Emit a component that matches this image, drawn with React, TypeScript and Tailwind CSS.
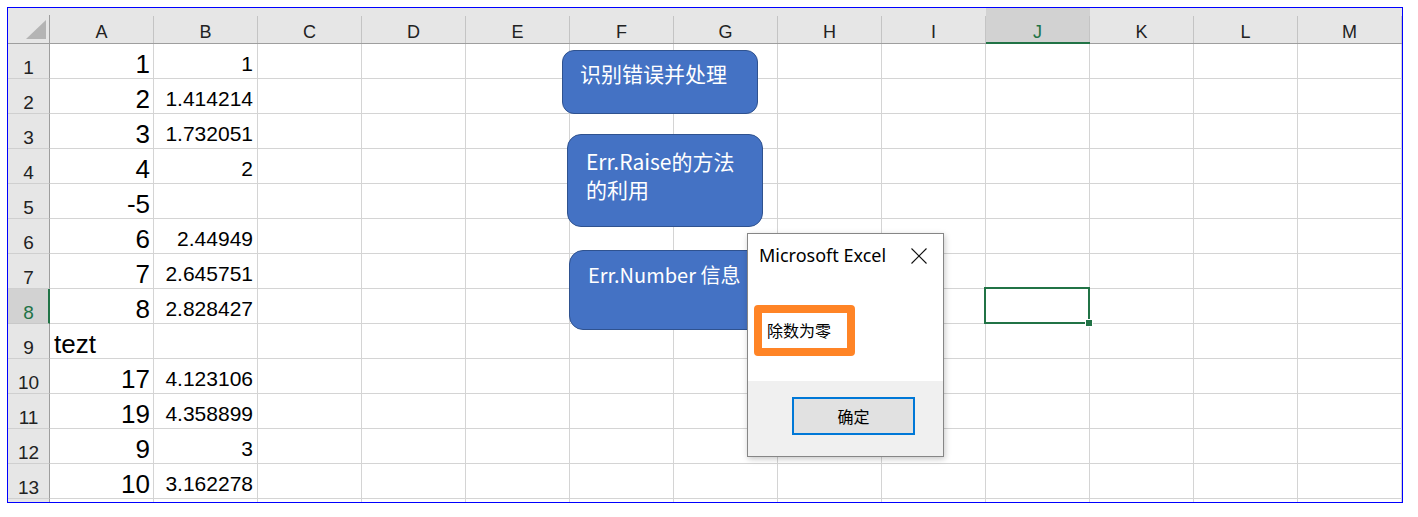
import React from 'react';

const COLS = ['A', 'B', 'C', 'D', 'E', 'F', 'G', 'H', 'I', 'J', 'K', 'L', 'M'];

type Row = { a: string; b: string; text?: boolean };

const DATA: Row[] = [
  { a: '1', b: '1' },
  { a: '2', b: '1.414214' },
  { a: '3', b: '1.732051' },
  { a: '4', b: '2' },
  { a: '-5', b: '' },
  { a: '6', b: '2.44949' },
  { a: '7', b: '2.645751' },
  { a: '8', b: '2.828427' },
  { a: 'tezt', b: '', text: true },
  { a: '17', b: '4.123106' },
  { a: '19', b: '4.358899' },
  { a: '9', b: '3' },
  { a: '10', b: '3.162278' },
  { a: '', b: '' },
];

function HeaderRow() {
  return (
    <div className="flex h-[36px]">
      <div className="w-[42px] h-[36px] bg-[#e6e6e6] border-b border-b-[#9e9e9e] flex">
        <div className="flex-1 flex items-end justify-end pr-[3px] pb-[4px]">
          <svg width="20" height="19" viewBox="0 0 20 19">
            <polygon points="20,0 20,19 0,19" fill="#b4b4b4" />
          </svg>
        </div>
        <div className="w-px mt-[7px] bg-[#9e9e9e]" />
      </div>
      {COLS.map((c) => {
        const sel = c === 'J';
        return (
          <div
            key={c}
            className={
              sel
                ? 'w-[104px] h-[36px] bg-[#d2d2d2] border-b-2 border-b-[#217346] flex'
                : 'w-[104px] h-[36px] bg-[#e6e6e6] border-b border-b-[#9e9e9e] flex'
            }
          >
            <div
              className={
                sel
                  ? 'flex-1 flex items-end justify-center pb-[1px] text-[18px] leading-none text-[#217346]'
                  : 'flex-1 flex items-end justify-center pb-[2px] text-[18px] leading-none text-[#222222]'
              }
            >
              {c}
            </div>
            <div className="w-px mt-[8px] bg-[#c4c4c4]" />
          </div>
        );
      })}
    </div>
  );
}

function DataRow({ row, idx }: { row: Row; idx: number }) {
  const n = idx + 1;
  const sel = n === 8;
  const label = n <= 13 ? String(n) : '';
  return (
    <div className="flex h-[35px]">
      <div
        className={
          sel
            ? 'w-[42px] h-[35px] bg-[#d2d2d2] border-b border-b-[#c8c8c8] border-r-2 border-r-[#217346] flex items-end justify-center pb-[1px] pl-px text-[19px] leading-none text-[#217346]'
            : 'w-[42px] h-[35px] bg-[#e6e6e6] border-b border-b-[#cfcfcf] border-r border-r-[#9e9e9e] flex items-end justify-center pb-[1px] text-[19px] leading-none text-[#222222]'
        }
      >
        {label}
      </div>
      {COLS.map((c) => {
        if (c === 'A') {
          return (
            <div
              key={c}
              className={
                row.text
                  ? 'w-[104px] h-[35px] border-r border-b border-[#d4d4d4] flex items-end justify-start pl-[4px] pb-[1px] text-[26px] leading-none text-black'
                  : 'w-[104px] h-[35px] border-r border-b border-[#d4d4d4] flex items-end justify-end pr-[3px] pb-[1px] text-[26px] leading-none text-black'
              }
            >
              {row.a}
            </div>
          );
        }
        if (c === 'B') {
          return (
            <div
              key={c}
              className="w-[104px] h-[35px] border-r border-b border-[#d4d4d4] flex items-end justify-end pr-[4px] pb-[4px] text-[21px] leading-none text-black"
            >
              {row.b}
            </div>
          );
        }
        return <div key={c} className="w-[104px] h-[35px] border-r border-b border-[#d4d4d4]" />;
      })}
    </div>
  );
}

export default function App() {
  return (
    <div className="relative w-[1418px] h-[517px] bg-white overflow-hidden font-['Liberation_Sans',sans-serif]">
      <div className="pt-[7px] pl-[7px]">
        <div className="w-[1396px] h-[496px] border border-[#0000ff] overflow-hidden">
          <HeaderRow />
          {DATA.map((r, i) => (
            <DataRow key={i} row={r} idx={i} />
          ))}
        </div>
      </div>

      {/* Selected cell J8 */}
      <div className="absolute left-[984px] top-[287px] w-[106px] h-[37px] border-2 border-[#217346]" />
      <div className="absolute left-[1085px] top-[319px] w-[8px] h-[8px] bg-[#217346] border border-white" />

      {/* Shapes */}
      <div className="absolute left-[562px] top-[50px] w-[196px] h-[64px] rounded-[12px] bg-[#4472c4] border-[1.5px] border-[#2f528f] pl-[17px] pt-[8px] text-white text-[21px] leading-[28px] font-['Noto_Sans_CJK_SC',sans-serif]">
        识别错误并处理
      </div>
      <div className="absolute left-[567px] top-[134px] w-[196px] h-[93px] rounded-[14px] bg-[#4472c4] border-[1.5px] border-[#2f528f] pl-[18px] pr-[10px] pt-[12px] text-white text-[21px] leading-[28px] font-['Noto_Sans_CJK_SC',sans-serif]">
        Err.Raise的方法
        <br />
        的利用
      </div>
      <div className="absolute left-[569px] top-[250px] w-[196px] h-[80px] rounded-[14px] bg-[#4472c4] border-[1.5px] border-[#2f528f] pl-[18px] pt-[10px] text-white text-[20px] leading-[28px] font-['Noto_Sans_CJK_SC',sans-serif] whitespace-nowrap">
        Err.Number 信息
      </div>

      {/* Dialog */}
      <div className="absolute left-[747px] top-[233px] w-[197px] h-[224px] bg-white border border-[#868686] shadow-[1px_2px_6px_rgba(0,0,0,0.22)] flex flex-col">
        <div className="h-[147px] bg-white flex flex-col">
          <div className="h-[34px] flex items-start justify-between pl-[11px] pr-[16px] pt-[9px]">
            <span className="text-[18px] leading-[24px] text-black font-['Noto_Sans',sans-serif]">Microsoft Excel</span>
            <svg width="16" height="16" viewBox="0 0 16 16" className="mt-[5px]">
              <path d="M0.5 0.5 L15.5 15.5 M15.5 0.5 L0.5 15.5" stroke="#111" strokeWidth="1.1" fill="none" />
            </svg>
          </div>
          <div className="mt-[52px] pl-[19px] text-[16px] leading-[20px] text-black font-['Noto_Sans_CJK_SC',sans-serif]">
            除数为零
          </div>
        </div>
        <div className="flex-1 bg-[#f0f0f0] pt-[16px] pl-[44px]">
          <div className="w-[123px] h-[38px] bg-[#e1e1e1] border-2 border-[#0078d7] flex items-center justify-center text-[16px] leading-none text-black font-['Noto_Sans_CJK_SC',sans-serif]">
            确定
          </div>
        </div>
      </div>

      {/* Orange annotation */}
      <div className="absolute left-[754px] top-[305px] w-[101px] h-[51px] border-[8px] border-[#ff8426] rounded-[4px]" />
    </div>
  );
}
